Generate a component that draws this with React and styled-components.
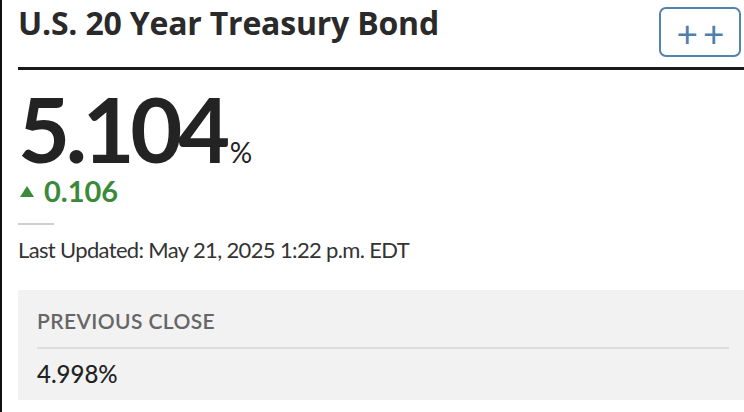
import styled, { createGlobalStyle } from 'styled-components'

const Global = createGlobalStyle`
  html, body { margin: 0; padding: 0; background: #fff; }
  body { font-family: Lato, "Noto Sans", sans-serif; color: #222; }
`

const Page = styled.div`
  width: 744px;
  height: 412px;
  box-sizing: border-box;
  border-left: 2px solid #111;
  padding-left: 16px;
  overflow: hidden;
`

const Header = styled.div`
  display: flex;
  justify-content: space-between;
  align-items: flex-start;
  height: 70px;
  box-sizing: border-box;
  border-bottom: 3px solid #1a1a1a;
`

const Title = styled.h1`
  margin: 3px 0 0;
  font-family: "Open Sans", Lato, sans-serif;
  font-weight: 700;
  font-size: 32px;
  line-height: 40px;
  letter-spacing: -0.2px;
  color: #2a2a2a;
`

const AddButton = styled.button`
  width: 82px;
  height: 50px;
  margin: 7px 3px 0 0;
  padding: 0 0 0 6px;
  border: 2px solid #5282ae;
  border-radius: 7px;
  background: #fff;
  color: #4f7fac;
  font-family: Lato, sans-serif;
  font-size: 37px;
  font-weight: 400;
  line-height: 1;
  letter-spacing: 5px;
`

const Quote = styled.div`
  display: flex;
  align-items: baseline;
  margin-top: 18px;
`

const Price = styled.span`
  font-family: Lato, sans-serif;
  font-weight: 700;
  font-size: 90px;
  line-height: 80px;
  letter-spacing: -4.5px;
  color: #232323;
`

const Unit = styled.span`
  font-family: Lato, sans-serif;
  font-size: 28px;
  line-height: 30px;
  margin-left: 4px;
  color: #232323;
`

const Change = styled.div`
  display: flex;
  align-items: center;
  gap: 10px;
  margin-top: 8px;
  color: #3b8a3a;
  font-family: Lato, sans-serif;
  font-weight: 700;
  font-size: 29px;
  line-height: 30px;
`

const Arrow = styled.span`
  width: 0;
  height: 0;
  margin-left: 2px;
  border-left: 7px solid transparent;
  border-right: 7px solid transparent;
  border-bottom: 11px solid #3b8a3a;
`

const Rule = styled.div`
  width: 36px;
  height: 2px;
  background: #cfcfcf;
  margin-top: 17px;
`

const Updated = styled.p`
  margin: 12px 0 0;
  font-family: Lato, sans-serif;
  font-size: 22px;
  line-height: 26px;
  letter-spacing: -0.65px;
  color: #333;
`

const Panel = styled.section`
  margin-top: 27px;
  background: #f2f2f2;
  padding: 19px 15px 0 19px;
  height: 110px;
  box-sizing: border-box;
`

const Label = styled.div`
  font-family: Lato, sans-serif;
  font-size: 21px;
  font-weight: 600;
  letter-spacing: 0.4px;
  color: #666;
  line-height: 24px;
  padding-bottom: 14px;
  border-bottom: 2px solid #dedede;
`

const Value = styled.div`
  font-family: Lato, sans-serif;
  font-size: 24px;
  font-weight: 500;
  color: #222;
  margin-top: 11px;
  line-height: 28px;
`

export default function App() {
  return (
    <Page>
      <Global />
      <Header>
        <Title>U.S. 20 Year Treasury Bond</Title>
        <AddButton>++</AddButton>
      </Header>
      <Quote>
        <Price>5.104</Price>
        <Unit>%</Unit>
      </Quote>
      <Change>
        <Arrow />
        0.106
      </Change>
      <Rule />
      <Updated>Last Updated: May 21, 2025 1:22 p.m. EDT</Updated>
      <Panel>
        <Label>PREVIOUS CLOSE</Label>
        <Value>4.998%</Value>
      </Panel>
    </Page>
  )
}
